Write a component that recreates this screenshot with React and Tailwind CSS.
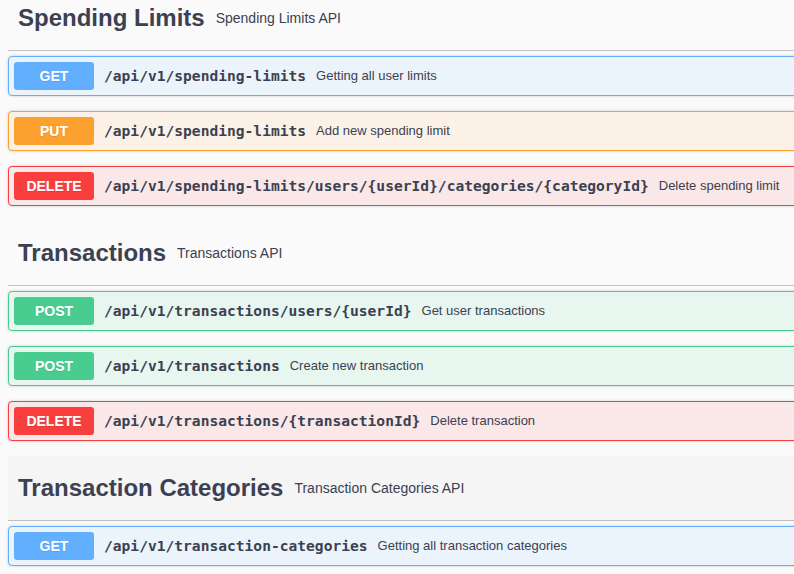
import React from 'react';

// method colours, written out so tailwind picks them up
const methodStyles = {
  GET: {
    block: 'bg-[#ebf3fb] border-[#61affe]',
    badge: 'bg-[#61affe]',
  },
  PUT: {
    block: 'bg-[#fbf1e6] border-[#fca130]',
    badge: 'bg-[#fca130]',
  },
  POST: {
    block: 'bg-[#e8f6f0] border-[#49cc90]',
    badge: 'bg-[#49cc90]',
  },
  DELETE: {
    block: 'bg-[#fae7e7] border-[#f93e3e]',
    badge: 'bg-[#f93e3e]',
  },
};

const sections = [
  {
    name: 'Spending Limits',
    desc: 'Spending Limits API',
    ops: [
      { method: 'GET', path: '/api/v1/spending-limits', summary: 'Getting all user limits' },
      { method: 'PUT', path: '/api/v1/spending-limits', summary: 'Add new spending limit' },
      {
        method: 'DELETE',
        path: '/api/v1/spending-limits/users/{userId}/categories/{categoryId}',
        summary: 'Delete spending limit',
      },
    ],
  },
  {
    name: 'Transactions',
    desc: 'Transactions API',
    ops: [
      { method: 'POST', path: '/api/v1/transactions/users/{userId}', summary: 'Get user transactions' },
      { method: 'POST', path: '/api/v1/transactions', summary: 'Create new transaction' },
      { method: 'DELETE', path: '/api/v1/transactions/{transactionId}', summary: 'Delete transaction' },
    ],
  },
  {
    name: 'Transaction Categories',
    desc: 'Transaction Categories API',
    hovered: true,
    ops: [
      {
        method: 'GET',
        path: '/api/v1/transaction-categories',
        summary: 'Getting all transaction categories',
      },
    ],
  },
];

const OpBlock = ({ op }) => {
  const s = methodStyles[op.method];
  return (
    <div
      className={`mb-[15px] flex items-center h-[40px] p-[5px] border rounded-[4px] shadow-[0_0_3px_rgba(0,0,0,0.19)] ${s.block}`}
    >
      <span
        className={`w-[80px] h-[28px] shrink-0 flex items-center justify-center rounded-[3px] text-white text-[14px] font-bold font-['Liberation_Sans',Arial,sans-serif] [text-shadow:0_1px_0_rgba(0,0,0,0.1)] ${s.badge}`}
      >
        {op.method}
      </span>
      <span className="pl-[10px] text-[14.6px] font-bold text-[#3b4151] font-['DejaVu_Sans_Mono',monospace] whitespace-nowrap">
        {op.path}
      </span>
      <span className="pl-[10px] text-[13px] text-[#3b4151] font-['Liberation_Sans',Arial,sans-serif] whitespace-nowrap">
        {op.summary}
      </span>
    </div>
  );
};

const App = () => {
  return (
    <div className="w-[794px] h-[574px] overflow-hidden bg-[#fafafa]">
      <div className="w-[840px] pl-[8px] -mt-[14px]">
        {sections.map((section, index) => (
          <div key={index}>
            <div
              className={`mb-[5px] flex items-center h-[65px] pl-[10px] border-b border-[rgba(59,65,81,0.3)] font-['Liberation_Sans',Arial,sans-serif] text-[#3b4151] ${
                section.hovered ? 'bg-[rgba(0,0,0,0.02)]' : ''
              }`}
            >
              <span className="text-[24px] font-bold">{section.name}</span>
              <span className="pl-[11px] text-[14px]">{section.desc}</span>
            </div>
            {section.ops.map((op, i) => (
              <OpBlock key={i} op={op} />
            ))}
          </div>
        ))}
      </div>
    </div>
  );
};

export default App;
